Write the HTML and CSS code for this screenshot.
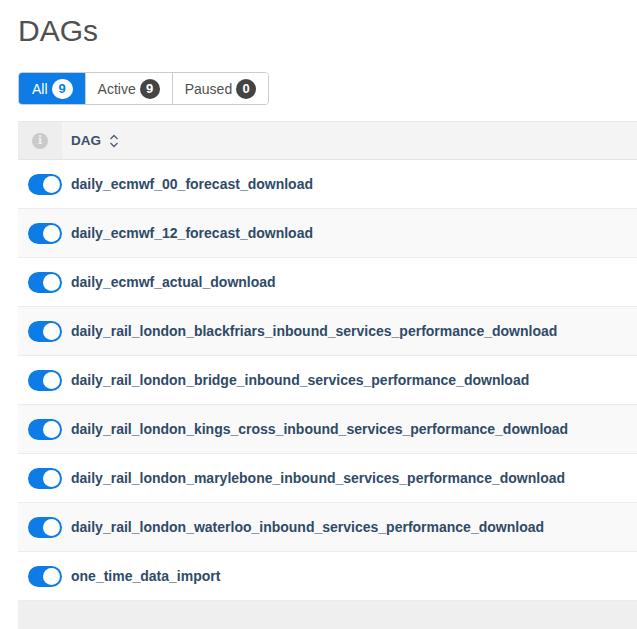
FILE: index.html
```html
<!DOCTYPE html>
<html>
<head>
<meta charset="utf-8">
<link rel="stylesheet" href="styles.css">
</head>
<body>
<div class="page">
  <h1 class="title">DAGs</h1>
  <div class="filters">
    <button class="fbtn active">All <span class="badge light">9</span></button>
    <button class="fbtn">Active <span class="badge">9</span></button>
    <button class="fbtn">Paused <span class="badge">0</span></button>
  </div>
  <div class="table">
    <div class="thead">
      <div class="cell-info"><span class="info">i</span></div>
      <div class="cell-name head">DAG
        <svg class="sort" width="10" height="14" viewBox="0 0 10 14"><path d="M1.5 5 L5 1.5 L8.5 5 M1.5 9 L5 12.5 L8.5 9" fill="none" stroke="#4a5e74" stroke-width="1.3"/></svg>
      </div>
    </div>
    <div class="row"><span class="toggle"></span><a class="name">daily_ecmwf_00_forecast_download</a></div>
    <div class="row"><span class="toggle"></span><a class="name">daily_ecmwf_12_forecast_download</a></div>
    <div class="row"><span class="toggle"></span><a class="name">daily_ecmwf_actual_download</a></div>
    <div class="row"><span class="toggle"></span><a class="name">daily_rail_london_blackfriars_inbound_services_performance_download</a></div>
    <div class="row"><span class="toggle"></span><a class="name">daily_rail_london_bridge_inbound_services_performance_download</a></div>
    <div class="row"><span class="toggle"></span><a class="name">daily_rail_london_kings_cross_inbound_services_performance_download</a></div>
    <div class="row"><span class="toggle"></span><a class="name">daily_rail_london_marylebone_inbound_services_performance_download</a></div>
    <div class="row"><span class="toggle"></span><a class="name">daily_rail_london_waterloo_inbound_services_performance_download</a></div>
    <div class="row"><span class="toggle"></span><a class="name">one_time_data_import</a></div>
    <div class="foot"></div>
  </div>
</div>
</body>
</html>
```
FILE: styles.css
```css
* { box-sizing: border-box; }
html, body { margin: 0; padding: 0; background: #fff; }
body { font-family: "Liberation Sans", Arial, sans-serif; color: #444; }
.page { padding: 14px 0 0 18px; }
.title { margin: 0; font-size: 30px; font-weight: 400; color: #51504f; line-height: 34px; }
.filters { display: inline-flex; margin-top: 24px; border: 1px solid #ccc; border-radius: 4px; overflow: hidden; height: 33px; }
.fbtn { font-family: inherit; font-size: 14px; color: #51504f; background: #fff; border: 0; border-left: 1px solid #ccc; padding: 0 12px; display: flex; align-items: center; gap: 4px; cursor: pointer; }
.fbtn:first-child { border-left: 0; }
.fbtn.active { background: #0d7ce6; color: #fff; padding: 0 12px 0 13px; }
.badge { display: inline-flex; align-items: center; justify-content: center; min-width: 20px; height: 20px; border-radius: 10px; background: #444; color: #fff; font-size: 13px; font-weight: 700; padding: 0 4px; }
.badge.light { background: #fff; color: #0d7ce6; min-width: 21px; }
.table { margin-top: 16px; background: #efefef; border-top: 1px solid #e8e8e8; }
.thead { display: flex; height: 38px; background: #f4f4f4; border-bottom: 1px solid #e4e4e4; }
.cell-info { width: 44px; background: #eeeeee; display: flex; align-items: center; justify-content: center; }
.info { width: 16px; height: 16px; border-radius: 50%; background: #cacaca; color: #f2f2f2; font-size: 11px; font-weight: 700; display: flex; align-items: center; justify-content: center; font-family: "DejaVu Serif", serif; }
.cell-name { display: flex; align-items: center; gap: 8px; padding-left: 9px; }
.head { font-size: 13.5px; font-weight: 700; color: #3b5068; }
.sort { display: block; }
.row { display: flex; align-items: center; height: 49px; background: #fff; border-bottom: 1px solid #ececec; padding-left: 10px; }
.row:nth-child(odd) { background: #f9f9f9; }
.toggle { position: relative; width: 34px; height: 21px; border-radius: 11px; background: #0d7ce6; flex: none; }
.toggle::after { content: ""; position: absolute; right: 2px; top: 2px; width: 17px; height: 17px; border-radius: 50%; background: #fff; }
.name { margin-left: 9px; font-size: 14px; font-weight: 700; color: #2f4b67; }
.foot { height: 40px; }
```
